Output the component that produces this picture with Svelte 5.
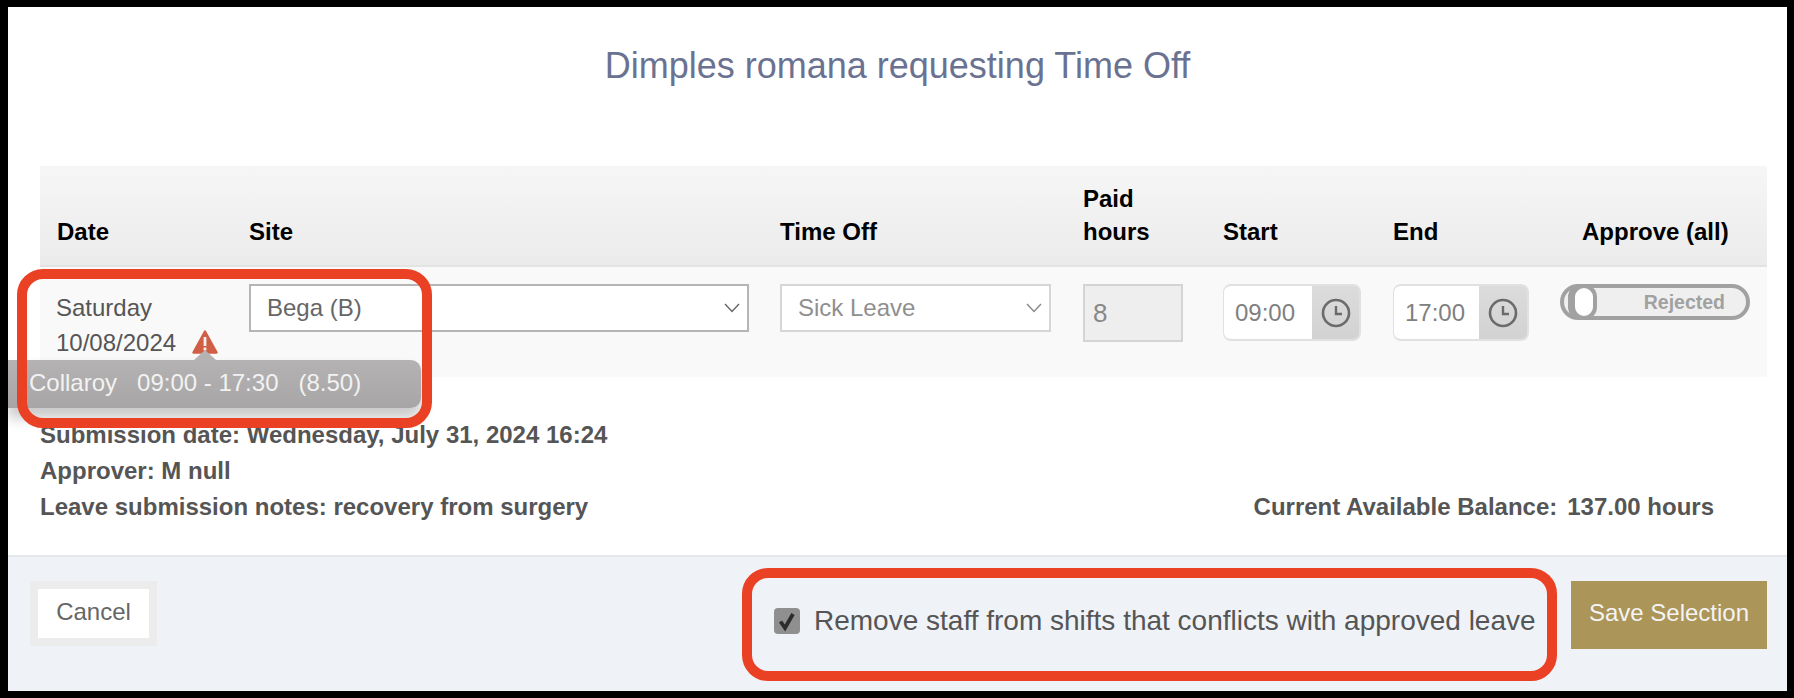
<script>
  const head = [
    { label: 'Date' }, { label: 'Site' }, { label: 'Time Off' },
    { label: 'Paid hours', narrow: true }, { label: 'Start' }, { label: 'End' }, { label: 'Approve (all)', approve: true }
  ];
  const times = ['09:00', '17:00'];
</script>

<div class="frame">
  <main class="page">
    <h1>Dimples romana requesting Time Off</h1>

    <section class="table">
      <div class="row head">
        {#each head as h}
          <div class="th" class:narrow={h.narrow} class:approve={h.approve}>{h.label}</div>
        {/each}
      </div>
      <div class="row body">
        <div class="date">
          <div>Saturday</div>
          <div class="dateline">10/08/2024
            <svg class="warn" viewBox="0 0 26 24" width="26" height="24">
              <path d="M13 1.5 L24.5 22.5 L1.5 22.5 Z" fill="#cf5f45" stroke="#cf5f45" stroke-width="2.4" stroke-linejoin="round"/>
              <rect x="11.6" y="7" width="2.8" height="9" fill="#f4eeec"/>
              <rect x="11.6" y="17.5" width="2.8" height="3" fill="#f4eeec"/>
            </svg>
          </div>
        </div>
        <div class="select site">
          <span>Bega (B)</span>
          <svg viewBox="0 0 16 10" width="16" height="10"><path d="M1 1 L8 8.5 L15 1" fill="none" stroke="#666" stroke-width="1.4"/></svg>
        </div>
        <div class="select off">
          <span>Sick Leave</span>
          <svg viewBox="0 0 16 10" width="16" height="10"><path d="M1 1 L8 8.5 L15 1" fill="none" stroke="#888" stroke-width="1.4"/></svg>
        </div>
        <div class="paid">8</div>
        {#each times as t, i}
          <div class="time" class:second={i === 1}>
            <span class="val">{t}</span>
            <span class="clockbox">
              <svg viewBox="0 0 30 30" width="30" height="30">
                <circle cx="15" cy="15" r="13" fill="none" stroke="#6b6b6b" stroke-width="2.6"/>
                <path d="M15 8 V16 H21" fill="none" stroke="#6b6b6b" stroke-width="2.4"/>
              </svg>
            </span>
          </div>
        {/each}
        <div class="toggle">
          <span class="knob"></span>
          <span class="toggletext">Rejected</span>
        </div>
      </div>
    </section>

    <section class="details">
      <div class="left">
        <div>Submission date: Wednesday, July 31, 2024 16:24</div>
        <div>Approver: M null</div>
        <div>Leave submission notes: recovery from surgery</div>
      </div>
      <div class="balance"><span>Current Available Balance:</span><span>137.00 hours</span></div>
    </section>

    <footer>
      <button class="cancel">Cancel</button>
      <label class="remove">
        <span class="check">
          <svg viewBox="0 0 26 26" width="26" height="26"><path d="M6.5 13.5 L11 20 L19 6" fill="none" stroke="#2c2c2c" stroke-width="3.8"/></svg>
        </span>
        Remove staff from shifts that conflicts with approved leave
      </label>
      <button class="save">Save Selection</button>
    </footer>

    <div class="tooltip">
      <span class="arrow"></span>
      <span>Collaroy</span><span>09:00 - 17:30</span><span>(8.50)</span>
    </div>
    <div class="mark mark1"></div>
    <div class="mark mark2"></div>
  </main>
</div>

<style>
  :global(body) {
    margin: 0;
    background: #000;
    font-family: "Liberation Sans", Arial, sans-serif;
  }
  .frame {
    width: 1794px;
    height: 698px;
    padding: 7px 7px 7px 8px;
    box-sizing: border-box;
    background: #000;
  }
  .page {
    position: relative;
    height: 684px;
    background: #fff;
    display: flex;
    flex-direction: column;
    color: #555;
  }
  h1 {
    margin: 0;
    height: 159px;
    padding-top: 38px;
    box-sizing: border-box;
    text-align: center;
    font-size: 36px;
    line-height: 42px;
    font-weight: 400;
    color: #6b7291;
  }
  .table {
    margin: 0 20px 0 32px;
  }
  .row {
    display: grid;
    grid-template-columns: 192px 531px 303px 140px 170px 167px 1fr;
    padding-left: 17px;
  }
  .head {
    height: 99px;
    align-items: end;
    background: linear-gradient(#f6f6f6, #ebebeb);
    border-bottom: 2px solid #e3e3e3;
    color: #000;
  }
  .th {
    font-weight: 700;
    font-size: 24px;
    line-height: 33px;
    padding-bottom: 17px;
  }
  .narrow { width: 95px; }
  .approve { padding-left: 22px; white-space: nowrap; }
  .body {
    height: 110px;
    background: #f9f9f9;
    padding-top: 17px;
    box-sizing: border-box;
    align-items: start;
  }
  .date {
    font-size: 24px;
    line-height: 35px;
    color: #555;
    padding-top: 6px;
    margin-left: -1px;
  }
  .dateline { display: flex; align-items: center; white-space: nowrap; gap: 16px; height: 35px; }
  .warn { flex: none; margin-top: -1px; }
  .select {
    height: 48px;
    box-sizing: border-box;
    display: flex;
    align-items: center;
    justify-content: space-between;
    background: #fff;
    padding: 0 7px 0 16px;
    font-size: 24px;
  }
  .site { width: 500px; border: 2px solid #b5b5b5; color: #666; }
  .off { width: 271px; border: 2px solid #d6d6d6; color: #8f8f8f; }
  .paid {
    width: 100px;
    height: 58px;
    box-sizing: border-box;
    border: 2px solid #d4d4d4;
    background: #eeeeee;
    color: #888;
    font-size: 26px;
    line-height: 54px;
    padding-left: 8px;
  }
  .time {
    width: 138px;
    height: 57px;
    box-sizing: border-box;
    display: flex;
    border-radius: 8px;
    background: linear-gradient(#dcdcdc, #d2d2d2);
    border: 2px solid #e1e1e1;
    border-left-width: 1px;
    overflow: hidden;
  }
  .time.second { width: 136px; }
  .val {
    width: 88px;
    box-sizing: border-box;
    padding-left: 11px;
    background: #fff;
    color: #808080;
    font-size: 24px;
    line-height: 53px;
  }
  .second .val { width: 85px; }
  .clockbox {
    flex: 1;
    display: flex;
    align-items: center;
    justify-content: center;
  }
  .toggle {
    position: relative;
    width: 190px;
    height: 36px;
    box-sizing: border-box;
    border: 4px solid #a1a1a1;
    border-radius: 18px;
    background: #efefef;
  }
  .knob {
    position: absolute;
    left: 7px;
    top: -4px;
    width: 26px;
    height: 36px;
    box-sizing: border-box;
    border: 4px solid #a1a1a1;
    border-radius: 13px;
    background: #fff;
    box-shadow: -4px 0 0 -1px #a1a1a1;
  }
  .toggletext {
    position: absolute;
    right: 21px;
    top: 4px;
    font-size: 19.5px;
    line-height: 20px;
    font-weight: 700;
    color: #a1a1a1;
  }
  .details {
    flex: 1;
    display: flex;
    justify-content: space-between;
    align-items: flex-end;
    margin: 0 73px 0 32px;
    padding-bottom: 30px;
    font-weight: 700;
    font-size: 24px;
    line-height: 36px;
    color: #555;
  }
  .balance { display: flex; gap: 10px; }
  footer {
    height: 136px;
    box-sizing: border-box;
    border-top: 2px solid #e3e7ec;
    background: #eff2f7;
    display: flex;
    align-items: flex-start;
    padding: 24px 20px 0 22px;
  }
  button {
    font-family: inherit;
    border: none;
    padding: 0;
  }
  .cancel {
    width: 127px;
    height: 65px;
    box-sizing: border-box;
    border: 8px solid #ececec;
    background: #fff;
    color: #666;
    font-size: 24px;
    padding-bottom: 3px;
  }
  .remove {
    margin-left: 617px;
    margin-top: 27px;
    display: flex;
    align-items: center;
    gap: 14px;
    font-size: 28px;
    line-height: 26px;
    white-space: nowrap;
    color: #555;
  }
  .check {
    width: 26px;
    height: 26px;
    border-radius: 4px;
    background: #8f8f8f;
    display: block;
    flex: none;
  }
  .check svg { display: block; }
  .save {
    margin-left: auto;
    width: 196px;
    height: 68px;
    background: #ab9558;
    color: #f4f4f4;
    font-size: 24px;
    padding-bottom: 4px;
  }
  .tooltip {
    position: absolute;
    left: 0;
    top: 353px;
    width: 413px;
    height: 48px;
    box-sizing: border-box;
    padding: 0 0 2px 21px;
    display: flex;
    gap: 20px;
    align-items: center;
    border-radius: 0 10px 10px 0;
    background: linear-gradient(#b4b2b2, #a7a5a5);
    box-shadow: 0 10px 14px rgba(0,0,0,.22);
    color: #f2f2f2;
    font-size: 24px;
  }
  .arrow {
    position: absolute;
    left: 186px;
    top: -10px;
    width: 0;
    height: 0;
    border-left: 11px solid transparent;
    border-right: 11px solid transparent;
    border-bottom: 10px solid #b4b2b2;
  }
  .mark {
    position: absolute;
    box-sizing: border-box;
    border: 10px solid #ea4125;
    border-radius: 26px;
  }
  .mark1 { left: 9px; top: 262px; width: 415px; height: 159px; }
  .mark2 { left: 734px; top: 561px; width: 815px; height: 113px; }
</style>
